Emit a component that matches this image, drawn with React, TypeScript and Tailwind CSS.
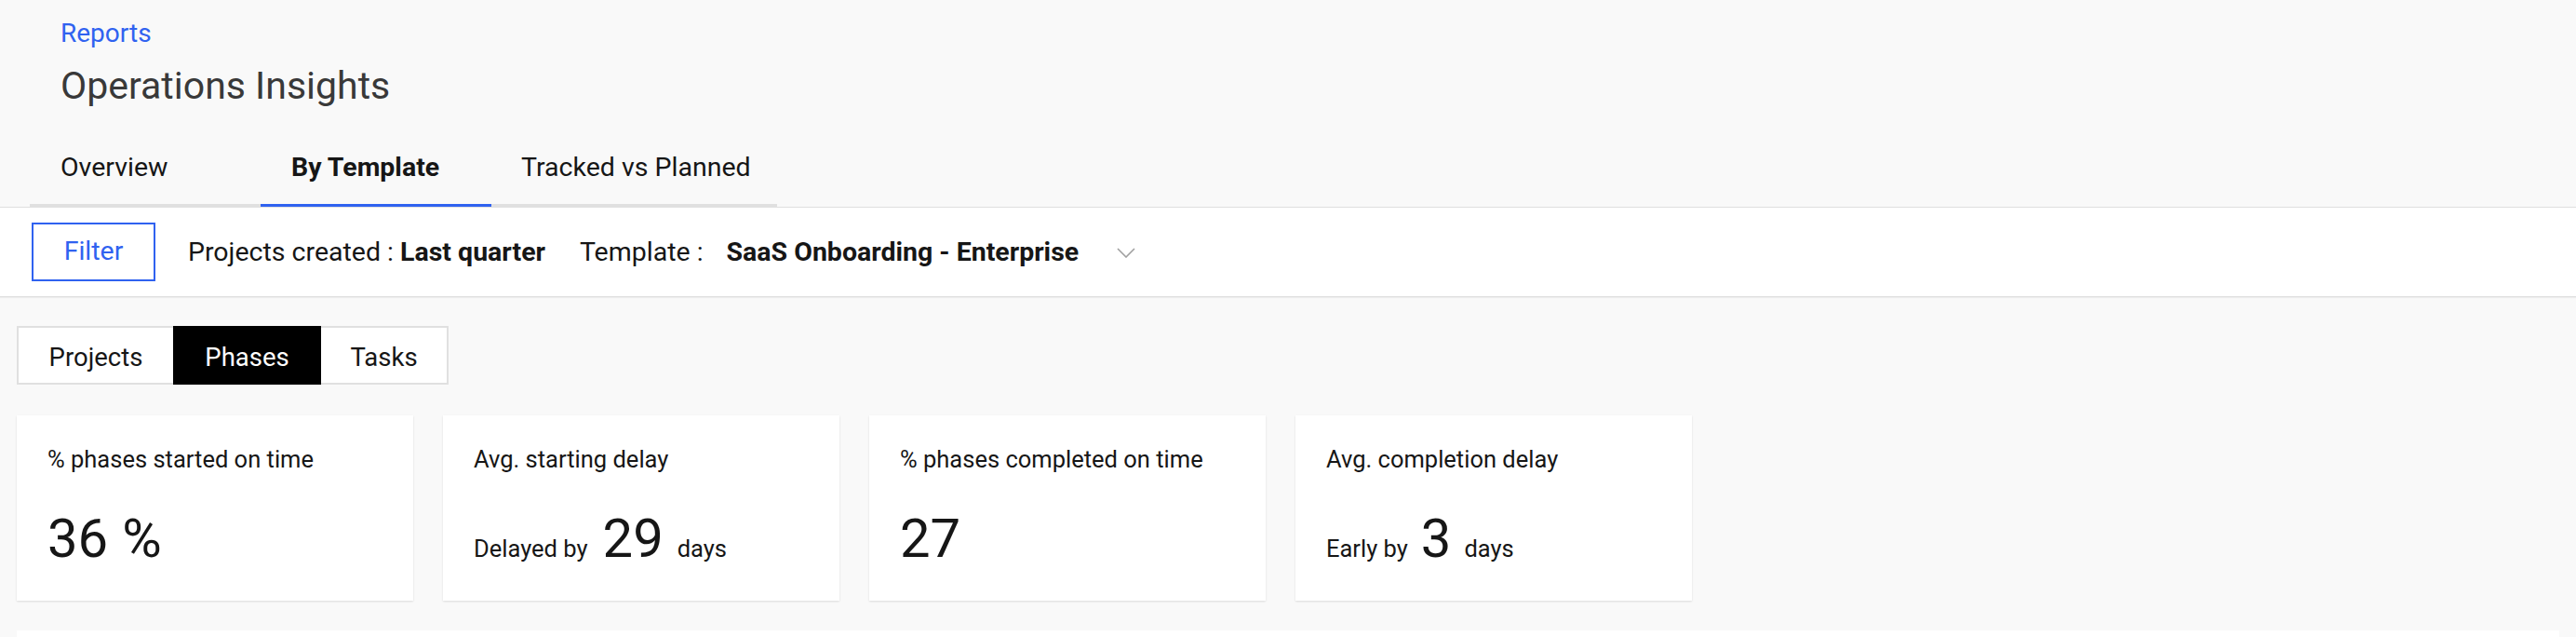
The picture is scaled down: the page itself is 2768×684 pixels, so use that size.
import React from "react";

const font = { fontFamily: "Roboto, 'Liberation Sans', sans-serif" };

function Chevron() {
  return (
    <svg width="20" height="11" viewBox="0 0 20 11" fill="none" className="block">
      <path d="M1 1 L10 10 L19 1" stroke="#a0a0a0" strokeWidth="1.6" />
    </svg>
  );
}

function Card({ title, children }: { title: string; children: React.ReactNode }) {
  return (
    <div className="h-[199px] bg-white pt-[31px] px-[33px] shadow-[0_1px_2px_rgba(0,0,0,0.12)]">
      <div className="text-[25.5px] leading-[32px] text-[#161616]">{title}</div>
      <div className="mt-[40px] flex items-baseline text-[#161616]">{children}</div>
    </div>
  );
}

export default function App() {
  return (
    <div style={font} className="min-h-screen bg-[#f9f9f9] text-[#161616]">
      <header className="bg-[#f9f9f9] pt-[22px]">
        <div className="pl-[65px] text-[28px] leading-[28px] text-[#3062f0]">Reports</div>
        <h1 className="pl-[65px] mt-[18px] text-[41px] leading-[48px] text-[#393939] font-normal">
          Operations Insights
        </h1>
        <nav className="mt-[26px] pl-[32px] flex">
          <div className="w-[248px] pl-[33px] pt-[24px] pb-[24.5px] border-b-[3px] border-[#e0e0e0] text-[28.5px] leading-[28.5px]">
            Overview
          </div>
          <div className="w-[248px] pl-[33px] pt-[24px] pb-[24.5px] border-b-[3px] border-[#3062f0] text-[28.5px] leading-[28.5px] font-bold">
            By Template
          </div>
          <div className="w-[307px] pl-[32px] pt-[24px] pb-[24.5px] border-b-[3px] border-[#e0e0e0] text-[28.5px] leading-[28.5px]">
            Tracked vs Planned
          </div>
        </nav>
      </header>

      <div className="h-[97px] bg-white border-y border-[#e0e0e0] shadow-[0_1px_1px_rgba(0,0,0,0.05)] flex items-center pl-[34px] text-[28.5px]">
        <button className="w-[133px] h-[63px] border-2 border-[#3062f0] text-[#3062f0] flex items-center justify-center">
          Filter
        </button>
        <div className="ml-[35px] pt-[2px]">
          Projects created : <span className="font-bold">Last quarter</span>
        </div>
        <div className="ml-[37px] pt-[2px]">Template :</div>
        <div className="ml-[25px] pt-[2px] font-bold">SaaS Onboarding - Enterprise</div>
        <div className="ml-[41px] pt-[2px]">
          <Chevron />
        </div>
      </div>

      <main className="px-[18px] pt-[31px]">
        <div className="flex text-[27.5px]">
          <div className="w-[168px] h-[63px] border-2 border-r-0 border-[#e0e0e0] bg-white flex items-center justify-center pt-[4px]">
            Projects
          </div>
          <div className="w-[159px] h-[63px] bg-black text-white flex items-center justify-center pt-[4px]">
            Phases
          </div>
          <div className="w-[137px] h-[63px] border-2 border-l-0 border-[#e0e0e0] bg-white flex items-center justify-center pt-[4px]">
            Tasks
          </div>
        </div>

        <div className="mt-[33px] grid grid-cols-[repeat(4,426px)] gap-[32px]">
          <Card title="% phases started on time">
            <span className="text-[58px] leading-[58px]">36</span>
            <span className="ml-[15px] text-[58px] leading-[58px]">%</span>
          </Card>
          <Card title="Avg. starting delay">
            <span className="text-[25.5px]">Delayed by</span>
            <span className="ml-[16px] text-[58px] leading-[58px]">29</span>
            <span className="ml-[15px] text-[25.5px]">days</span>
          </Card>
          <Card title="% phases completed on time">
            <span className="text-[58px] leading-[58px]">27</span>
          </Card>
          <Card title="Avg. completion delay">
            <span className="text-[25.5px]">Early by</span>
            <span className="ml-[14px] text-[58px] leading-[58px]">3</span>
            <span className="ml-[14px] text-[25.5px]">days</span>
          </Card>
        </div>

        <div className="mt-[32px] h-[200px] bg-white" />
      </main>
    </div>
  );
}
